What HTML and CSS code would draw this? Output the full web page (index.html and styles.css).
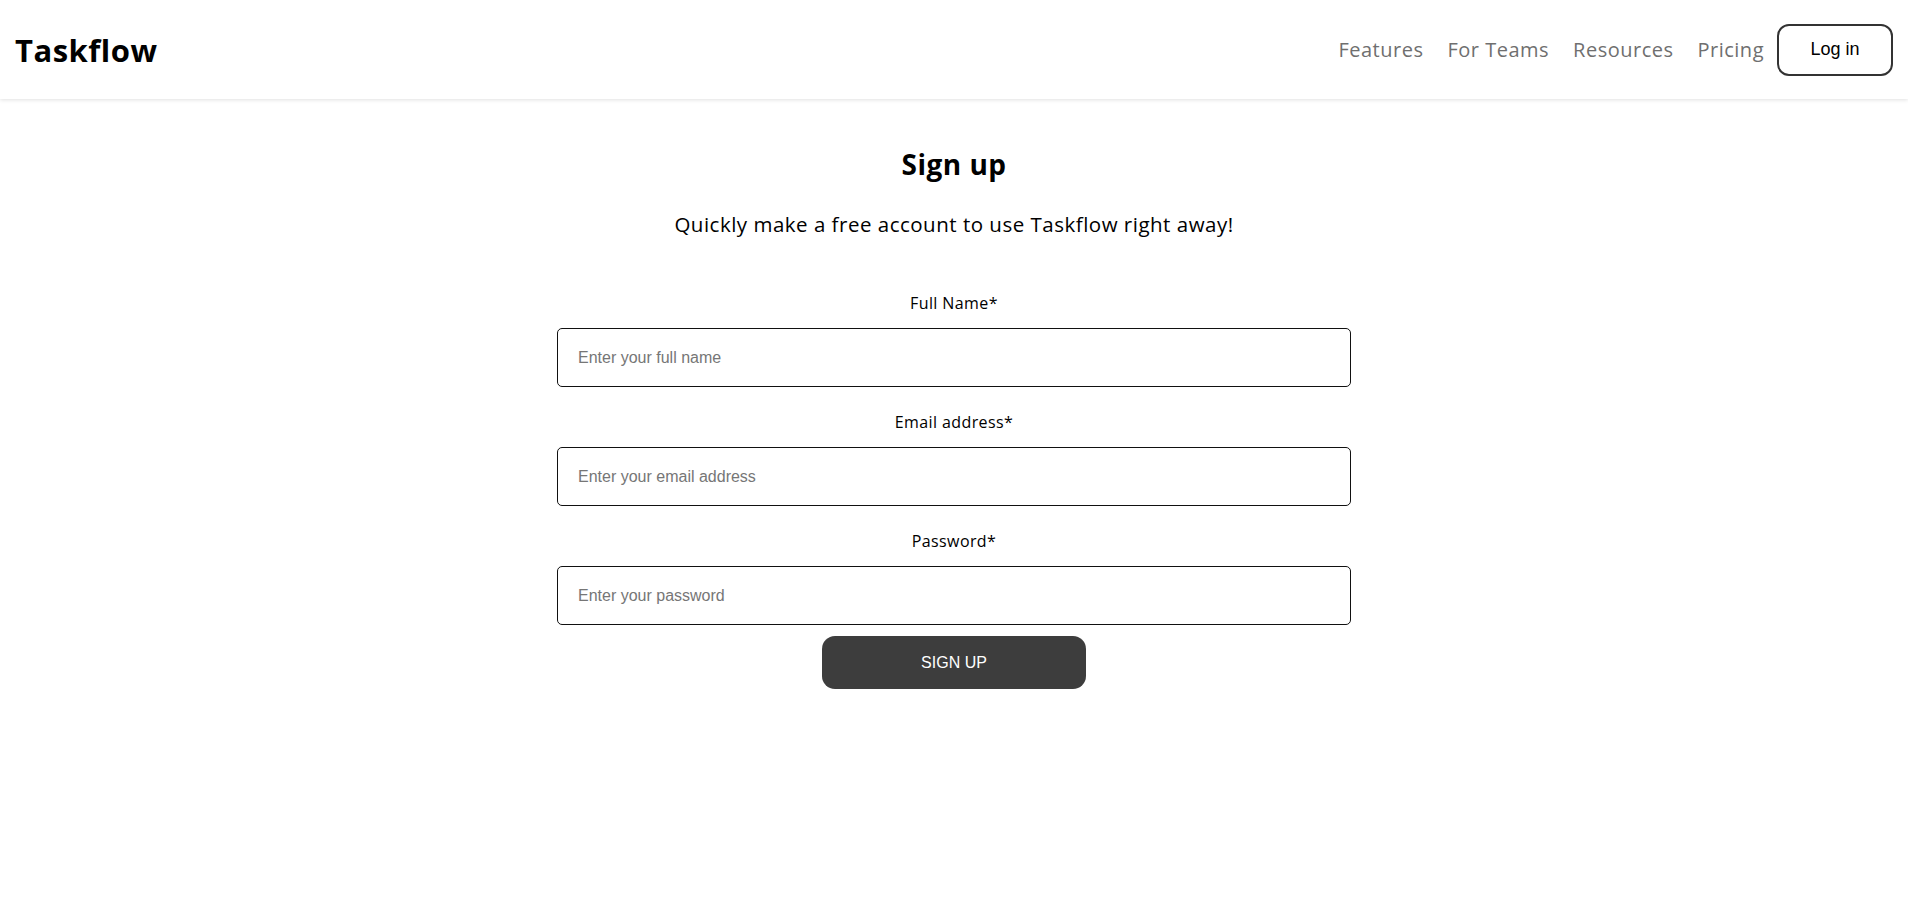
FILE: index.html
```html
<!DOCTYPE html>
<html lang="en">
<head>
<meta charset="utf-8">
<title>Taskflow - Sign up</title>
<link rel="stylesheet" href="styles.css">
</head>
<body>
<header class="site-header">
  <div class="logo">Taskflow</div>
  <nav class="nav">
    <a class="nav-link" href="#">Features</a>
    <a class="nav-link" href="#">For Teams</a>
    <a class="nav-link" href="#">Resources</a>
    <a class="nav-link" href="#">Pricing</a>
    <button class="login-btn" type="button">Log in</button>
  </nav>
</header>
<main class="main">
  <h1 class="title">Sign up</h1>
  <p class="subtitle">Quickly make a free account to use Taskflow right away!</p>
  <form class="form">
    <label class="field-label" for="name">Full Name*</label>
    <input class="field-input" id="name" type="text" placeholder="Enter your full name">
    <label class="field-label" for="email">Email address*</label>
    <input class="field-input" id="email" type="email" placeholder="Enter your email address">
    <label class="field-label" for="password">Password*</label>
    <input class="field-input" id="password" type="password" placeholder="Enter your password">
    <button class="signup-btn" type="button">SIGN UP</button>
  </form>
</main>
</body>
</html>
```
FILE: styles.css
```css
* { box-sizing: border-box; }
html, body { margin: 0; padding: 0; background: #fff; }
body { font-family: "Open Sans", "Liberation Sans", sans-serif; color: #000; }

.site-header {
  height: 99px;
  display: flex;
  align-items: center;
  justify-content: space-between;
  padding: 0 15px;
  box-shadow: 0 1px 4px rgba(0,0,0,0.12);
  background: #fff;
}
.logo { font-size: 31px; font-weight: 700; letter-spacing: 0.5px; }
.nav { display: flex; align-items: center; gap: 24px; }
.nav-link { color: #6f6f6f; text-decoration: none; font-size: 20px; letter-spacing: 0.5px; }
.login-btn {
  margin-left: -11px;
  width: 116px; height: 52px;
  border: 2px solid #333; border-radius: 12px; background: #fff;
  font-family: "Liberation Sans", Arial, sans-serif; font-size: 18px; color: #000;
}

.main { display: flex; flex-direction: column; align-items: center; }
.title { margin: 43px 0 0; font-size: 28px; font-weight: 700; line-height: 44px; letter-spacing: 0.5px; }
.subtitle { margin: 24px 0 0; font-size: 20.5px; line-height: 28px; letter-spacing: 0.5px; }
.form { width: 794px; display: flex; flex-direction: column; align-items: center; margin-top: 53px; }
.field-label { font-size: 16px; line-height: 24px; margin-top: 23px; letter-spacing: 0.4px; }
.field-label:first-child { margin-top: 0; }
.field-input {
  width: 100%; height: 59px; margin-top: 13px;
  border: 1.5px solid #111; border-radius: 5px;
  padding: 0 20px;
  font-family: "Liberation Sans", Arial, sans-serif; font-size: 16px;
}
.field-input::placeholder { color: #767676; }
.signup-btn {
  margin-top: 11px; width: 264px; height: 53px;
  background: #3d3d3d; color: #fff; border: none; border-radius: 13px;
  font-family: "Liberation Sans", Arial, sans-serif; font-size: 16px;
}
```
